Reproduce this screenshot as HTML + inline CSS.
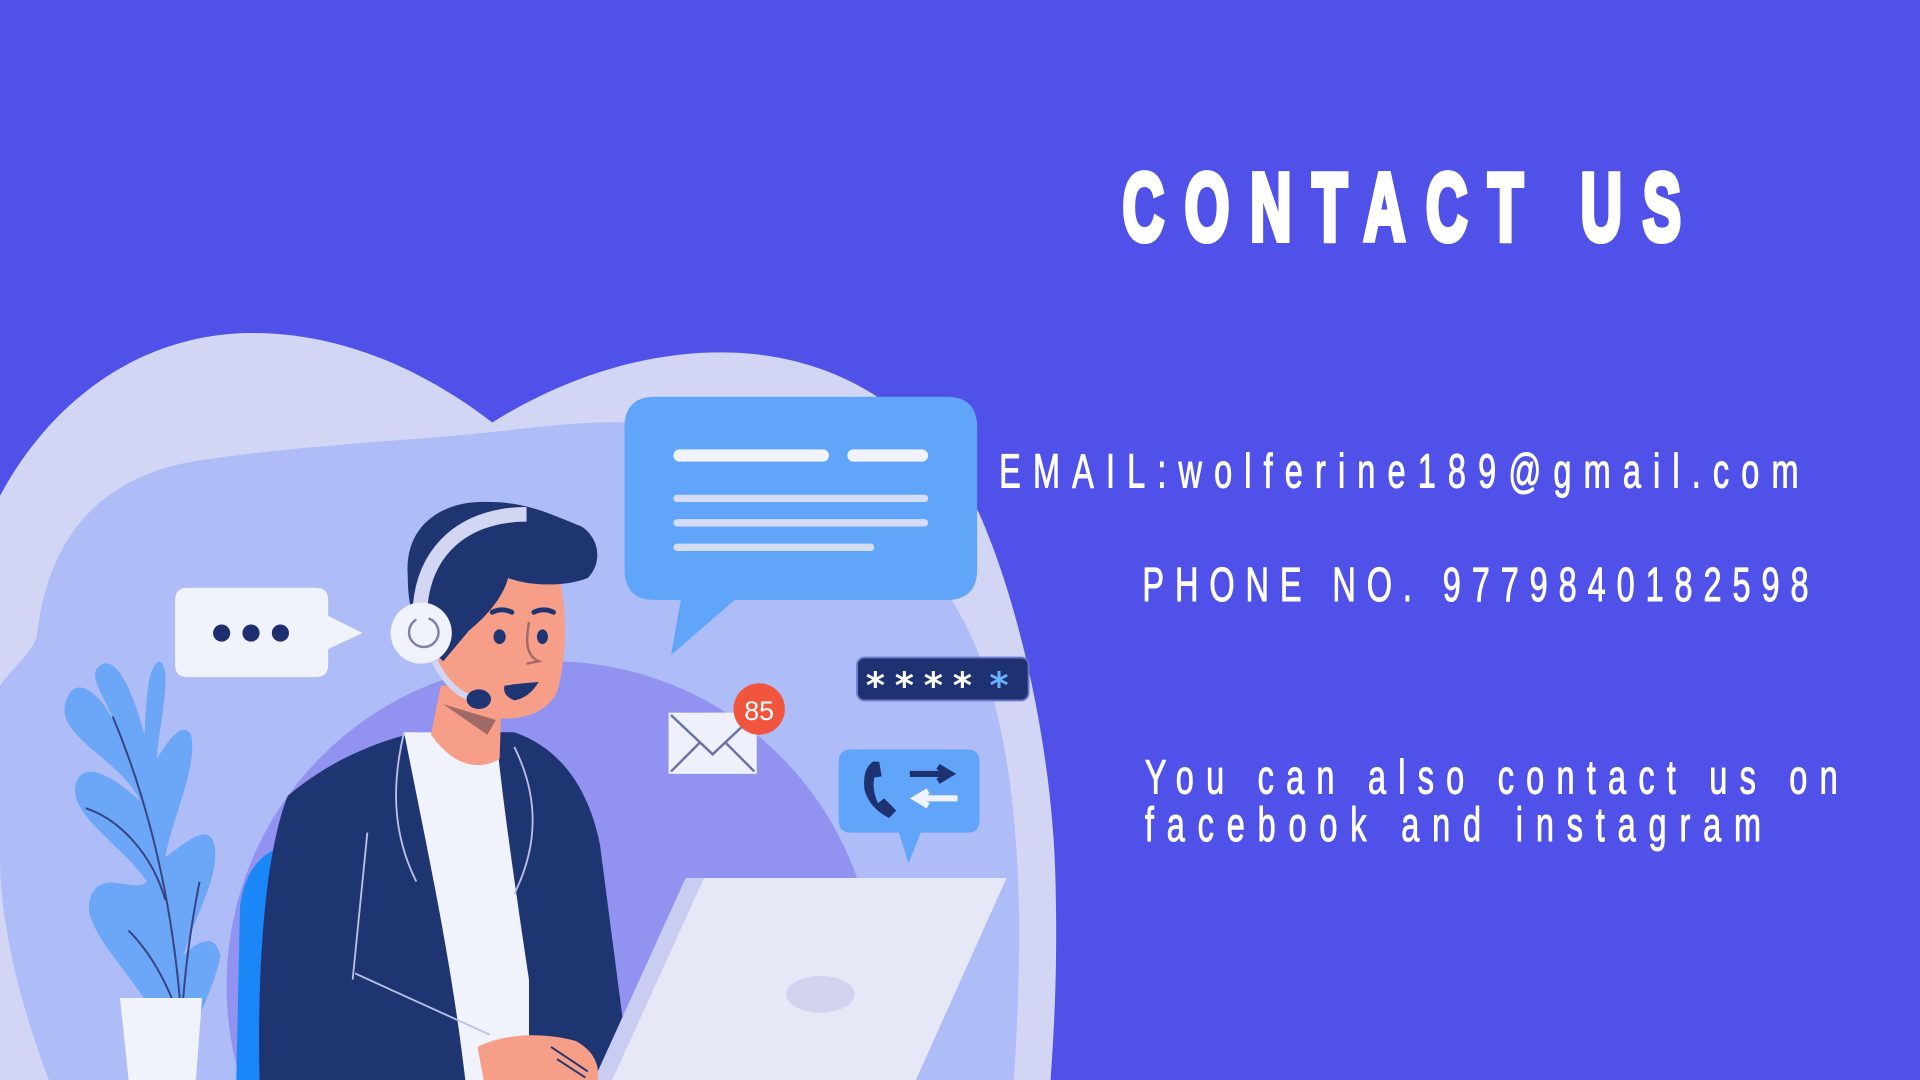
<!DOCTYPE html>
<html><head><meta charset="utf-8"><style>
html,body{margin:0;padding:0;width:1920px;height:1080px;overflow:hidden;background:#4f51e9}
svg{display:block;position:absolute;left:0;top:0}
text{font-family:"Liberation Sans",sans-serif;fill:#fff;white-space:pre}
</style></head><body>
<svg width="1920" height="1080" viewBox="0 0 1568 882" preserveAspectRatio="none" xmlns="http://www.w3.org/2000/svg" xml:space="preserve">
<rect width="1568" height="882" fill="#4f51e9"/>
<path d="M0 405 C40 330 110 275 200 272 C280 270 350 305 402 345 C450 315 520 285 600 288 C690 292 760 340 800 420 C835 500 860 620 862 720 C864 800 860 850 858 882 L0 882 Z" fill="#d3d5f4"/>
<path d="M30 520 C40 430 90 385 170 375 C260 362 340 360 410 352 C470 345 520 340 560 352 C640 380 720 420 770 480 C815 540 830 640 832 740 C833 800 830 850 828 882 L40 882 C20 830 0 760 0 700 L0 560 C10 545 25 535 30 520 Z" fill="#aebcf8"/>
<circle cx="450" cy="805" r="265" fill="#9293f0"/>
<path d="M535 324 H773 Q798 324 798 349 V465 Q798 490 773 490 H600 L548 535 L556 490 H535 Q510 490 510 465 V349 Q510 324 535 324 Z" fill="#61a5fb"/>
<rect x="550" y="367" width="127" height="10" rx="5" fill="#f0f2fc"/>
<rect x="692" y="367" width="66" height="10" rx="5" fill="#f0f2fc"/>
<rect x="550" y="404" width="208" height="6" rx="3" fill="#d5dcf7"/>
<rect x="550" y="424" width="208" height="6" rx="3" fill="#d5dcf7"/>
<rect x="550" y="444" width="164" height="6" rx="3" fill="#d5dcf7"/>
<path d="M153 480 H258 Q268 480 268 490 V503 L296 517 L268 530 V543 Q268 553 258 553 H153 Q143 553 143 543 V490 Q143 480 153 480 Z" fill="#f0f2fc"/>
<circle cx="181" cy="517" r="7" fill="#1e2e6e"/><circle cx="205" cy="517" r="7" fill="#1e2e6e"/><circle cx="229" cy="517" r="7" fill="#1e2e6e"/>
<rect x="700" y="537" width="140" height="35" rx="6" fill="#1e3170" stroke="#6a78c8" stroke-width="1.5"/>
<text x="707" y="570" font-size="30" font-weight="bold" letter-spacing="8" style="font-family:'DejaVu Sans',sans-serif">****</text>
<text x="808" y="570" font-size="30" font-weight="bold" style="font-family:'DejaVu Sans',sans-serif;fill:#6ab0ff">*</text>
<rect x="546" y="582" width="72" height="50" fill="#eef0fb"/>
<path d="M548 584 L582 616 L616 584 M548 630 L572 606 M616 630 L592 606" stroke="#6b72a8" stroke-width="2" fill="none"/>
<circle cx="620" cy="579" r="21" fill="#f2553d"/>
<text x="620" y="588" font-size="22" text-anchor="middle">85</text>
<path d="M695 612 H790 Q800 612 800 622 V670 Q800 680 790 680 H752 L742 705 L734 680 H695 Q685 680 685 670 V622 Q685 612 695 612 Z" fill="#61a5fb"/>
<path d="M713 622 Q704 628 706 645 Q710 660 726 668 L732 662 L722 652 L717 656 Q712 645 714 635 L720 634 L718 622 Z" fill="#1e3170"/>
<path d="M743 632 H772 M766 626 L776 632 L766 638" stroke="#1e3170" stroke-width="5" fill="none"/>
<path d="M782 652 H752 M758 646 L748 652 L758 658" stroke="#f0f2fc" stroke-width="5" fill="none"/>
<g fill="#6ba6f7">
<path d="M145 865 C120 800 60 760 75 730 C85 710 110 730 120 720 C100 690 55 665 62 640 C70 615 105 645 115 655 C100 620 40 600 55 570 C65 545 95 580 100 610 C95 580 70 555 80 545 C95 530 110 570 118 600 C120 570 120 545 130 540 C142 545 130 590 128 620 C140 600 150 590 156 600 C162 625 140 670 135 700 C150 690 170 670 175 690 C180 715 160 745 150 780 C160 770 175 760 180 780 C175 810 155 840 150 865 Z"/>
</g>
<path d="M92 585 C115 640 140 720 148 830 M70 660 C100 670 125 700 135 735 M163 720 C155 760 150 800 148 840 M105 760 C125 780 140 810 145 830" stroke="#36447f" stroke-width="1.6" fill="none"/>
<path d="M98 815 H165 L160 882 H105 Z" fill="#f0f2fc"/>
<path d="M240 690 C215 692 200 710 196 740 L193 882 H245 Z" fill="#1a86f7"/>
<path d="M235 650 C270 620 310 605 340 598 L420 598 C455 610 480 640 490 690 L515 882 L212 882 C210 800 215 700 235 650 Z" fill="#1f3572"/>
<path d="M330 598 L405 598 C410 650 420 720 432 800 L432 882 L380 882 C368 780 350 700 330 598 Z" fill="#f0f2fc"/>
<path d="M330 598 C320 640 320 680 340 720 M420 610 C440 650 440 690 420 730 M300 680 L288 800 M290 795 L400 845" stroke="#b9c2e6" stroke-width="1.5" fill="none"/>
<path d="M360 560 L410 560 L408 620 C390 630 370 625 352 600 Z" fill="#f79e88"/>
<path d="M362 575 L405 588 L398 600 Z" fill="#a06a66"/>
<path d="M360 470 C365 440 420 445 455 465 C465 500 462 540 455 565 C445 585 420 590 395 585 C370 575 355 550 356 515 Z" fill="#f79e88"/>
<path d="M333 470 C330 430 360 408 400 410 C430 410 450 420 475 430 C490 440 492 460 480 472 C460 480 430 478 415 472 C410 490 395 505 383 515 L362 540 C340 520 333 500 333 470 Z" fill="#1f3572"/>
<path d="M343 510 C340 455 375 420 430 420" stroke="#d3d6f2" stroke-width="12" fill="none"/>
<circle cx="344" cy="517" r="25" fill="#f0f2fc"/>
<path d="M350 505 A12 12 0 1 1 340 506" stroke="#7c82a8" stroke-width="2" fill="none"/>
<path d="M355 540 C365 560 378 570 392 572" stroke="#d3d6f2" stroke-width="5" fill="none"/>
<ellipse cx="391" cy="571" rx="10" ry="8" fill="#1f3572"/>
<path d="M402 500 Q410 496 418 500 M436 500 Q444 496 452 500" stroke="#1f3572" stroke-width="4" fill="none" stroke-linecap="round"/>
<ellipse cx="408" cy="520" rx="5" ry="6" fill="#1f3572"/><ellipse cx="443" cy="520" rx="4.5" ry="6" fill="#1f3572"/>
<path d="M432 508 C430 520 428 535 440 540 L430 542" stroke="#a06a66" stroke-width="2" fill="none"/>
<path d="M412 560 Q425 558 440 557 Q432 570 420 572 Q410 568 412 560 Z" fill="#1f3572"/>
<path d="M570 717 L822 717 L748 882 L495 882 Z" fill="#e6e8f8"/>
<path d="M560 717 L575 717 L500 882 L485 882 Z" fill="#c9cdf2"/>
<ellipse cx="670" cy="812" rx="28" ry="15" fill="#d2d4ef"/>
<path d="M390 855 C410 845 440 842 470 850 C485 858 490 870 488 882 L395 882 Z" fill="#f79e88"/>
<path d="M450 855 L480 875 M455 865 L478 880" stroke="#1f3572" stroke-width="1.5"/>
<g transform="scale(0.6,1)">
<text x="1528" y="196" font-size="78" font-weight="bold" stroke="#fff" stroke-width="5" textLength="760" lengthAdjust="spacing">CONTACT US</text>
</g>
<g transform="scale(0.68,1)">
<text x="1200" y="398" font-size="39" stroke="#fff" stroke-width="0.8" textLength="960" lengthAdjust="spacing">EMAIL:wolferine189@gmail.com</text>
<text x="1372" y="491" font-size="39" stroke="#fff" stroke-width="0.8" textLength="800" lengthAdjust="spacing">PHONE NO. 9779840182598</text>
<text x="1375" y="648" font-size="39" stroke="#fff" stroke-width="0.8" textLength="832" lengthAdjust="spacing">You can also contact us on</text>
<text x="1375" y="687" font-size="39" stroke="#fff" stroke-width="0.8" textLength="740" lengthAdjust="spacing">facebook and instagram</text>
</g>
</svg>
</body></html>
